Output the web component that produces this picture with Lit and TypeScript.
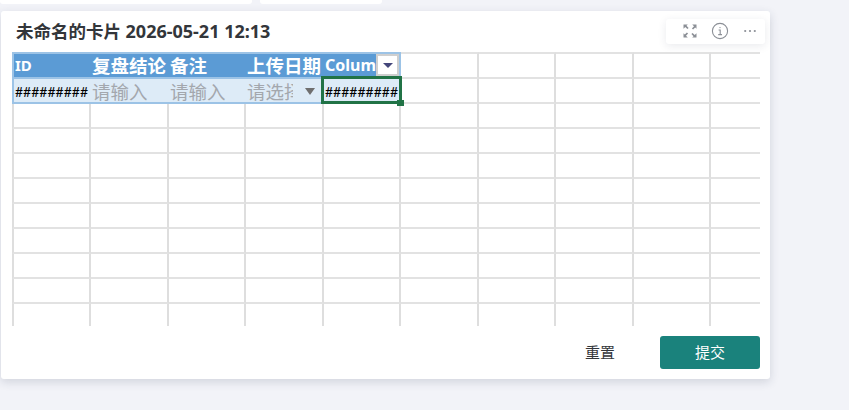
import { LitElement, html, css } from "lit";
import { customElement } from "lit/decorators.js";

const ROWS = 9;
const COLS = 10;

@customElement("app-root")
export class AppRoot extends LitElement {
  static styles = css`
    :host {
      display: block;
      width: 849px;
      height: 410px;
      background: #f2f3f8;
      font-family: "Noto Sans", "Noto Sans CJK SC", sans-serif;
      overflow: hidden;
      color: #33363a;
    }
    .stubs { display: flex; gap: 8px; height: 4px; }
    .stub { background: #fff; height: 4px; border-radius: 0 0 3px 3px; }
    .stub.a { width: 252px; }
    .stub.b { width: 122px; }
    .card {
      position: relative;
      box-sizing: border-box;
      margin: 7px 0 0 1px;
      width: 769px;
      height: 368px;
      background: #fff;
      border-radius: 3px;
      box-shadow: 0 3px 10px rgba(40, 50, 80, 0.16);
      padding: 0 10px 0 11px;
      display: flex;
      flex-direction: column;
    }
    .title {
      height: 41px;
      flex: none;
      padding-left: 4px;
      font-size: 17.5px;
      font-weight: 700;
      line-height: 41px;
      color: #33363a;
    }
    .title span { font-size: 18px; }
    .tools {
      position: absolute;
      top: 8px;
      right: 5px;
      width: 99px;
      height: 25px;
      background: #fff;
      border-radius: 3px;
      box-shadow: 0 2px 8px rgba(40, 50, 80, 0.1);
      display: flex;
      align-items: center;
      gap: 12px;
      padding-left: 15px;
      box-sizing: border-box;
    }
    .tools svg { display: block; width: 18px; height: 18px; margin-top: -1px; }
    .sheet {
      height: 274px;
      flex: none;
      overflow: hidden;
      display: grid;
      grid-template-columns: 79px 78px 77px 78px 77px 78px 77px 78px 77px 49px;
      grid-template-rows: 27px;
      grid-auto-rows: 25px;
      width: 748px;
    }
    .cell {
      box-sizing: border-box;
      border-right: 2px solid #dedede;
      border-bottom: 2px solid #e2e2e2;
      position: relative;
      white-space: nowrap;
      overflow: hidden;
      min-width: 0;
    }
    .cell.first { border-left: 2px solid #dedede; }
    .cell.top { border-top: 2px solid #e2e2e2; }
    .cell.last { border-right: 0; }
    .head {
      background: #5b9bd5;
      border-right: 0;
      border-top: 2px solid #9cc3e6;
      border-bottom: 2px solid #9cc3e6;
      color: #fff;
      font-size: 18.5px;
      font-weight: 700;
      line-height: 23px;
      padding-left: 1px;
    }
    .cell.head.first, .cell.input.first { border-left-color: #9cc3e6; }
    .head.latin { font-size: 15px; }
    .head.small { font-size: 16px; overflow: visible; }
    .head.small span { display: block; width: 52px; overflow: hidden; }
    .input {
      background: #ddebf7;
      border-right: 0;
      border-bottom: 2px solid #9cc3e6;
      font-size: 18.5px;
      line-height: 26px;
      padding-left: 1px;
      color: #a3a7ad;
    }
    .input.hash {
      color: #000;
      font-size: 14px;
      font-family: Lato, sans-serif;
      line-height: 25px;
    }
    .input.date span { display: block; width: 46px; overflow: hidden; }
    .caret {
      position: absolute;
      right: 9px;
      top: 9px;
      width: 0;
      height: 0;
      border-left: 5px solid transparent;
      border-right: 5px solid transparent;
      border-top: 7px solid #6f6f6f;
    }
    .edge { border-right: 2px solid #9cc3e6; }
    .selected { overflow: visible; z-index: 3; }
    .selected::after {
      content: "";
      position: absolute;
      inset: -3px -3px -2px -3px;
      border: 3px solid #217346;
      pointer-events: none;
    }
    .handle {
      position: absolute;
      right: -5px;
      bottom: -4px;
      width: 7px;
      height: 6px;
      background: #217346;
      z-index: 2;
    }
    .filter {
      position: absolute;
      right: 0;
      top: 0;
      width: 23px;
      height: 22px;
      box-sizing: border-box;
      background: #fff;
      border: 2px solid #cfcfcf;
      display: flex;
      align-items: center;
      justify-content: center;
    }
    .filter i {
      width: 0;
      height: 0;
      border-left: 5px solid transparent;
      border-right: 5px solid transparent;
      border-top: 5px solid #44467a;
    }
    .foot {
      flex: 1;
      display: flex;
      justify-content: flex-end;
      align-items: flex-start;
      padding-top: 10px;
    }
    button {
      font: inherit;
      font-size: 15px;
      border: 0;
      border-radius: 3px;
      width: 100px;
      height: 33px;
      background: transparent;
      color: #33363a;
      padding: 0 0 2px;
    }
    button.primary { background: #1a827c; color: #fff; margin-left: 10px; }
  `;

  render() {
    const blank = Array.from({ length: ROWS * COLS });
    const trailing = (top: boolean) =>
      Array.from({ length: 5 }).map(
        (_, i) =>
          html`<div class="cell ${top ? "top" : ""} ${i === 4 ? "last" : ""}"></div>`
      );
    return html`
      <div class="stubs"><div class="stub a"></div><div class="stub b"></div></div>
      <div class="card">
        <div class="title">未命名的卡片 <span>2026-05-21 12:13</span></div>
        <div class="tools">
          <svg viewBox="0 0 18 18" fill="#8b8f96">
            <path d="M2.5 2.5h4.3L5.5 3.8 7.6 5.9 6.4 7.1 4.3 5 2.5 6.8zM15.5 2.5v4.3L14.2 5.5 12.1 7.6 10.9 6.4 13 4.3 11.2 2.5zM2.5 15.5v-4.3l1.3 1.3 2.1-2.1 1.2 1.2L5 13.7l1.8 1.8zM15.5 15.5h-4.3l1.3-1.3-2.1-2.1 1.2-1.2 2.1 2.1 1.8-1.8z"/>
          </svg>
          <svg viewBox="0 0 18 18" fill="none" stroke="#8b8f96" stroke-width="1.1">
            <circle cx="9" cy="9" r="7.6"/>
            <path d="M7.6 8h1.6v4.6M7.2 12.6h3.8"/>
            <circle cx="9" cy="5.6" r=".7" fill="#8b8f96" stroke="none"/>
          </svg>
          <svg viewBox="0 0 18 18" fill="#8b8f96">
            <circle cx="4.2" cy="9" r="1.1"/><circle cx="9" cy="9" r="1.1"/><circle cx="13.8" cy="9" r="1.1"/>
          </svg>
        </div>
        <div class="sheet">
          <div class="cell head latin first">ID</div>
          <div class="cell head">复盘结论</div>
          <div class="cell head">备注</div>
          <div class="cell head">上传日期</div>
          <div class="cell head small edge"><span>Column1</span><div class="filter"><i></i></div></div>
          ${trailing(true)}
          <div class="cell input hash first">#########</div>
          <div class="cell input">请输入</div>
          <div class="cell input">请输入</div>
          <div class="cell input date"><span>请选择</span><div class="caret"></div></div>
          <div class="cell input hash edge selected">#########<div class="handle"></div></div>
          ${trailing(false)}
          ${blank.map(
            (_, i) =>
              html`<div class="cell ${i % COLS === 0 ? "first" : ""} ${i % COLS === COLS - 1 ? "last" : ""}"></div>`
          )}
        </div>
        <div class="foot">
          <button>重置</button>
          <button class="primary">提交</button>
        </div>
      </div>
    `;
  }
}
